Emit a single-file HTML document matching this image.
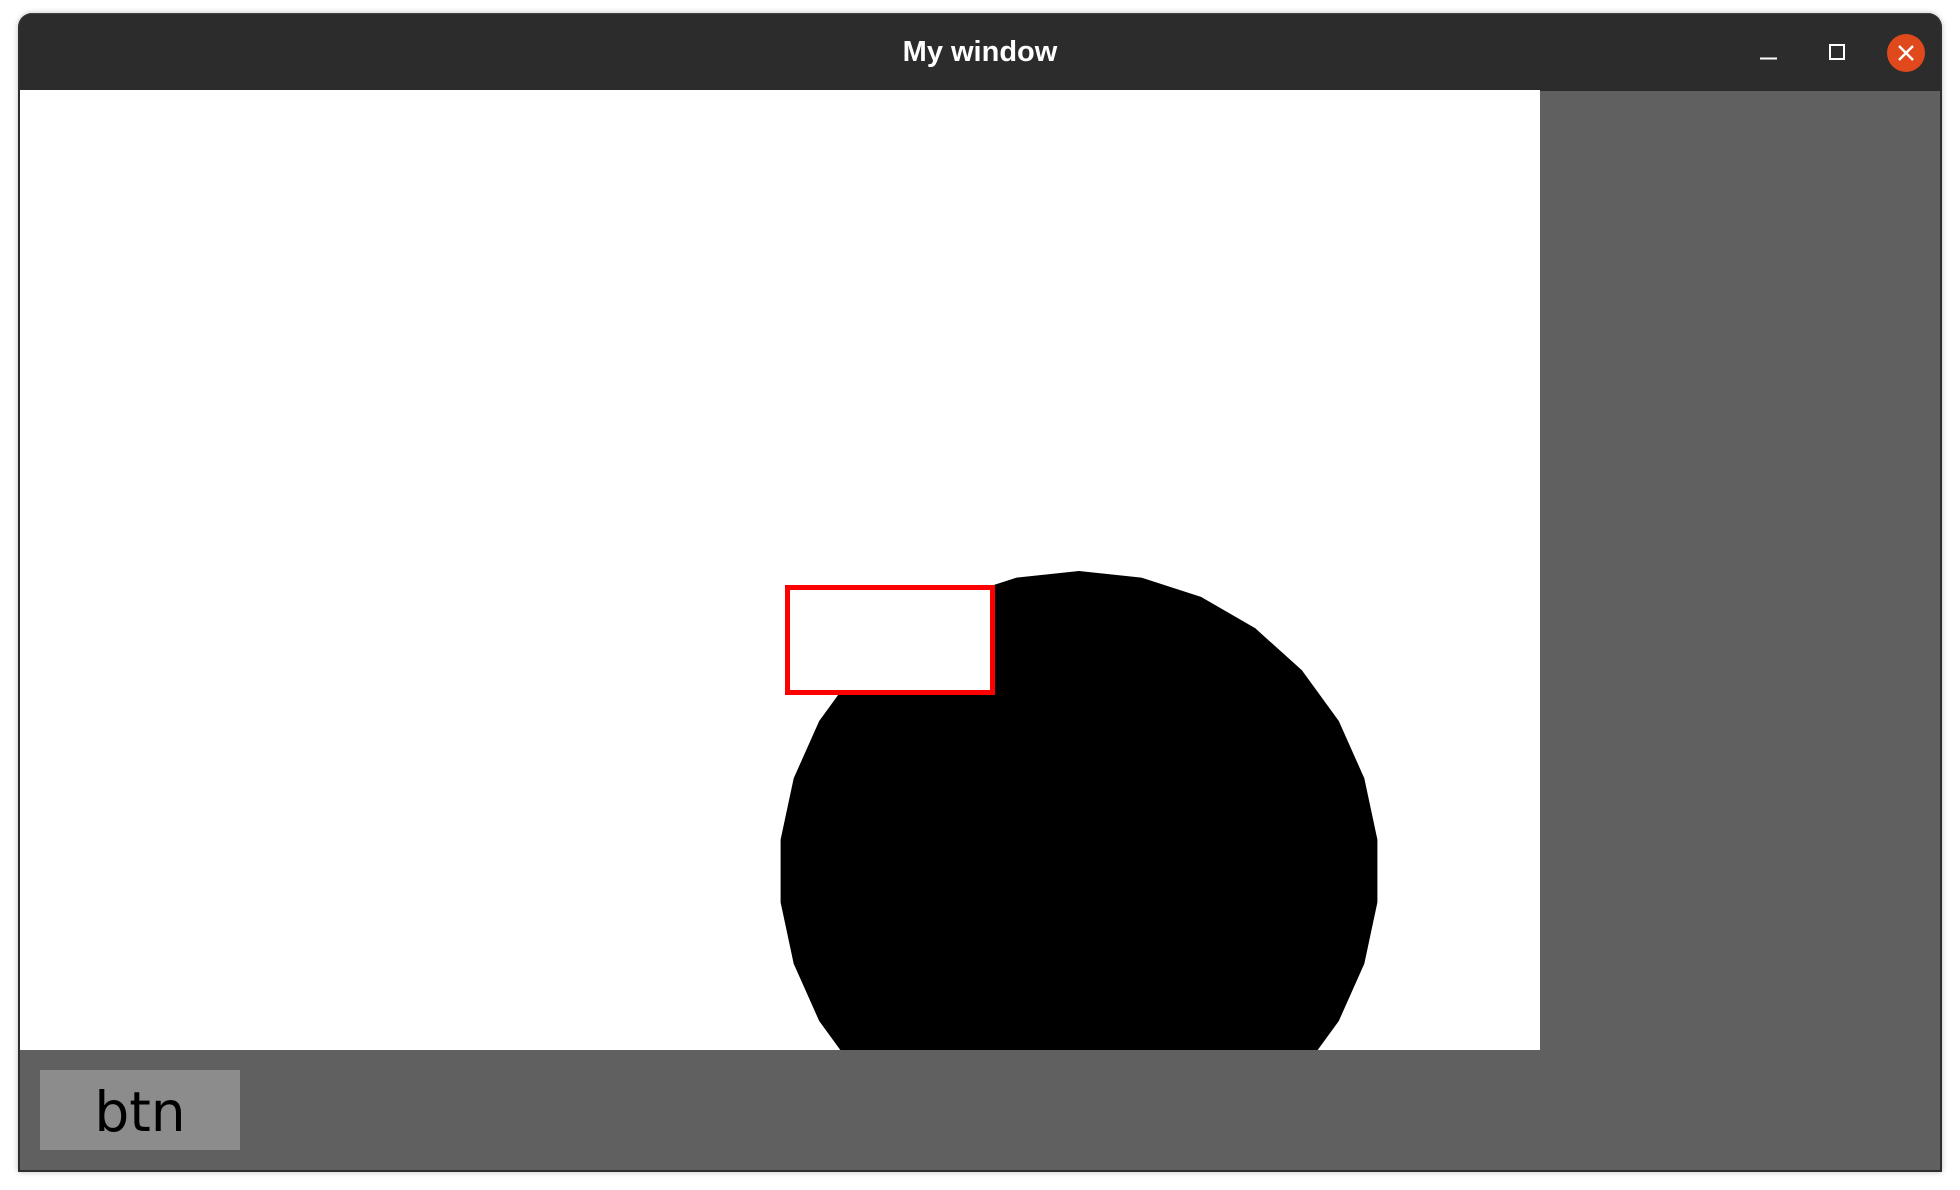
<!DOCTYPE html>
<html><head><meta charset="utf-8"><style>
html,body{margin:0;padding:0;background:#fff;width:1960px;height:1190px;overflow:hidden}
#win{position:absolute;left:18px;top:13px;width:1920px;height:1157px;border:2px solid #2e2e2e;border-top:none;border-radius:14px 14px 0 0;background:#606060;overflow:hidden;box-shadow:0 0 6px rgba(0,0,0,.25)}
#tb{position:absolute;left:0;top:0;width:1920px;height:77px;background:#2c2c2c;border-top:1px solid #444}
#title{position:absolute;left:0;width:1920px;top:0;text-align:center;color:#fff;font:bold 29px "Liberation Sans",sans-serif;line-height:77px}
#content{position:absolute;left:0;top:77px}
#btn{position:absolute;left:20px;top:1057px;width:200px;height:80px;background:#8c8c8c;font:55px "DejaVu Sans","Liberation Sans",sans-serif;color:#000;text-align:center;line-height:84px}
</style></head><body>
<div id="win">
<div id="tb"><div id="title">My window</div>
<svg style="position:absolute;left:0;top:0" width="1920" height="77">
<line x1="1740" y1="44.5" x2="1757" y2="44.5" stroke="#fff" stroke-width="2"/>
<rect x="1810" y="31" width="14" height="14" fill="none" stroke="#fff" stroke-width="2"/>
<circle cx="1886" cy="39" r="19" fill="#e0491b"/>
<path d="M1879 32 L1893 46 M1893 32 L1879 46" stroke="#fff" stroke-width="2.4"/>
</svg></div>
<svg id="content" width="1920" height="960" viewBox="20 90 1920 960">
<defs><clipPath id="c"><rect x="20" y="90" width="1520" height="960"/></clipPath></defs>
<rect x="20" y="90" width="1520" height="960" fill="#fff"/>
<polygon clip-path="url(#c)" fill="#000" points="1079,571 1141.4,577.6 1201,596.9 1255.3,628.3 1301.9,670.3 1338.8,721 1364.3,778.3 1377.4,839.6 1377.4,902.4 1364.3,963.7 1338.8,1021 1301.9,1071.7 856.1,1071.7 819.2,1021 793.7,963.7 780.6,902.4 780.6,839.6 793.7,778.3 819.2,721 856.1,670.3 902.7,628.3 957,596.9 1016.6,577.6"/>
<rect x="787.5" y="587.5" width="205" height="105" fill="#fff" stroke="#f00" stroke-width="5"/>
</svg>
<div id="btn">btn</div>
</div>
</body></html>
